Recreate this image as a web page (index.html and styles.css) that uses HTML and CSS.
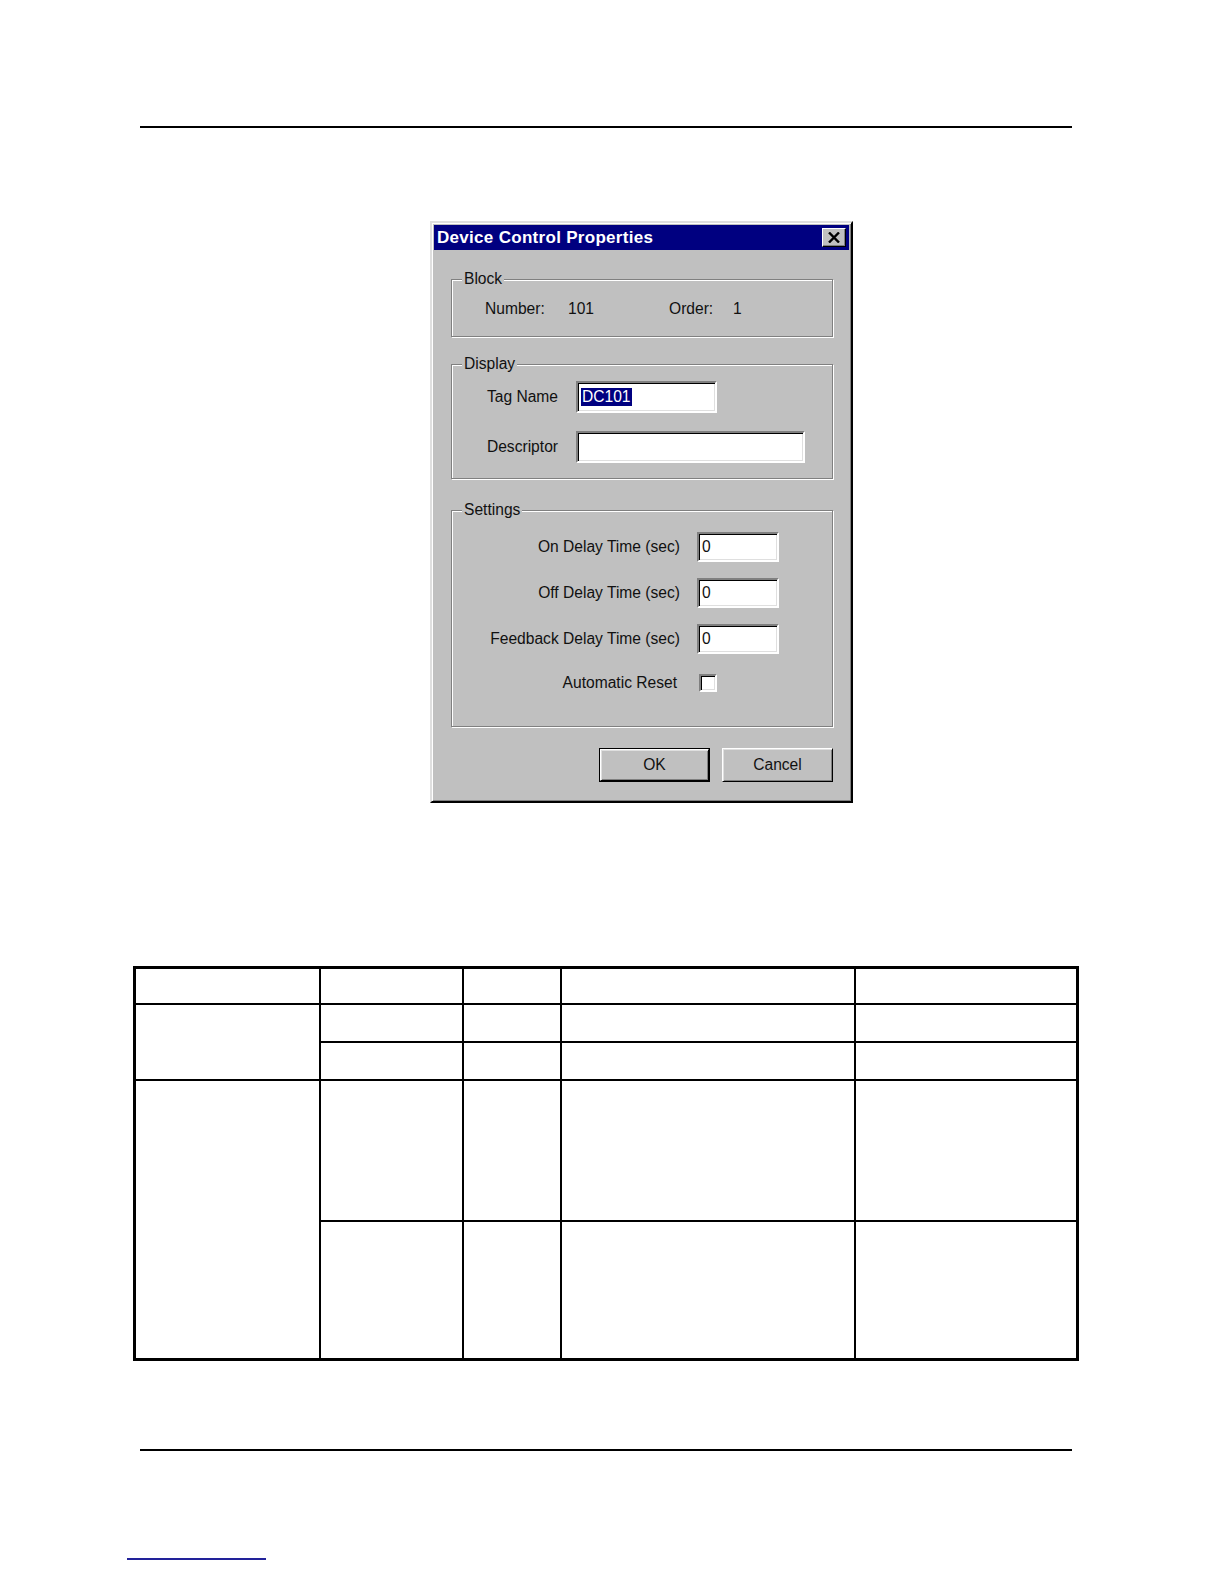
FILE: index.html
```html
<!DOCTYPE html>
<html lang="en">
<head>
<meta charset="utf-8">
<title>Device Control Properties</title>
<link rel="stylesheet" href="styles.css">
</head>
<body>
<div class="page">
  <div class="rule rule-top"></div>

  <div class="dialog">
    <div class="titlebar">
      <span class="title">Device Control Properties</span>
      <span class="close-btn">
        <svg width="12" height="11" viewBox="0 0 12 11"><path d="M1 0.5 L11 10.5 M11 0.5 L1 10.5" stroke="#000" stroke-width="2.4" fill="none"/></svg>
      </span>
    </div>
    <div class="dialog-body">
      <div class="group group-block">
        <span class="legend">Block</span>
        <div class="block-row">
          <span class="bl-num-label">Number:</span>
          <span class="bl-num">101</span>
          <span class="bl-ord-label">Order:</span>
          <span class="bl-ord">1</span>
        </div>
      </div>

      <div class="group group-display">
        <span class="legend">Display</span>
        <div class="form-grid display-grid">
          <span class="lbl">Tag Name</span>
          <div class="field field-tag"><span class="sel">DC101</span></div>
          <span class="lbl">Descriptor</span>
          <div class="field field-desc"></div>
        </div>
      </div>

      <div class="group group-settings">
        <span class="legend">Settings</span>
        <div class="form-grid settings-grid">
          <span class="lbl">On Delay Time (sec)</span>
          <div class="field field-num">0</div>
          <span class="lbl">Off Delay Time (sec)</span>
          <div class="field field-num">0</div>
          <span class="lbl">Feedback Delay Time (sec)</span>
          <div class="field field-num">0</div>
          <span class="lbl lbl-check">Automatic Reset</span>
          <div class="check-cell"><span class="checkbox"></span></div>
        </div>
      </div>

      <div class="buttons">
        <span class="btn btn-default"><span class="btn-face">OK</span></span>
        <span class="btn"><span class="btn-face">Cancel</span></span>
      </div>
    </div>
  </div>

  <div class="grid-table">
    <div class="cell"></div>
    <div class="cell"></div>
    <div class="cell"></div>
    <div class="cell"></div>
    <div class="cell"></div>

    <div class="cell span2"></div>
    <div class="cell"></div>
    <div class="cell"></div>
    <div class="cell"></div>
    <div class="cell"></div>
    <div class="cell"></div>
    <div class="cell"></div>
    <div class="cell"></div>
    <div class="cell"></div>

    <div class="cell span2"></div>
    <div class="cell"></div>
    <div class="cell"></div>
    <div class="cell"></div>
    <div class="cell"></div>
    <div class="cell"></div>
    <div class="cell"></div>
    <div class="cell"></div>
    <div class="cell"></div>
  </div>

  <div class="rule rule-bottom"></div>
  <div class="link-line"></div>
</div>
</body>
</html>
```

FILE: styles.css
```css
html, body {
  margin: 0;
  padding: 0;
  background: #fff;
}

.page {
  width: 1224px;
  height: 1584px;
  overflow: hidden;
  font-family: "Liberation Sans", Arial, sans-serif;
}

.rule {
  width: 932px;
  margin-left: 140px;
  border-top: 2px solid #000;
}

.rule-top {
  margin-top: 126px;
}

/* ---------- Dialog ---------- */
.dialog {
  box-sizing: border-box;
  width: 423px;
  height: 582px;
  margin: 93px 0 0 430px;
  padding: 2px;
  background: #c0c0c0;
  border: 2px solid;
  border-color: #dfdfdf #000 #000 #dfdfdf;
  box-shadow: inset 1px 1px 0 #fff, inset -1px -1px 0 #808080;
  font-size: 15.6px;
  color: #111;
}

.titlebar {
  height: 25px;
  background: #000080;
  display: flex;
  align-items: center;
  justify-content: space-between;
  padding: 0 3px 0 3px;
}

.title {
  color: #fff;
  font-weight: bold;
  font-size: 17px;
  letter-spacing: 0.3px;
}

.close-btn {
  box-sizing: border-box;
  width: 24px;
  height: 19px;
  background: #c0c0c0;
  border: 1px solid;
  border-color: #fff #000 #000 #fff;
  box-shadow: inset -1px -1px 0 #808080;
  display: flex;
  align-items: center;
  justify-content: center;
}

.dialog-body {
  padding: 0 16px 0 17px;
}

.group {
  position: relative;
  box-sizing: border-box;
  border: 1px solid #808080;
  box-shadow: inset 1px 1px 0 #fff, 1px 1px 0 #fff;
}

.legend {
  position: absolute;
  top: -10px;
  left: 10px;
  padding: 0 2px;
  line-height: 18px;
  background: #c0c0c0;
}

.group-block {
  margin-top: 29px;
  height: 58px;
}

.block-row {
  display: flex;
  padding: 20px 0 0 33px;
  line-height: 18px;
}

.bl-num-label { width: 83px; }
.bl-num { width: 101px; }
.bl-ord-label { width: 64px; }

.group-display {
  margin-top: 27px;
  height: 115px;
}

.form-grid {
  display: grid;
  align-items: center;
}

.display-grid {
  grid-template-columns: 106px auto;
  column-gap: 18px;
  row-gap: 18px;
  justify-items: start;
  padding-top: 16px;
}

.display-grid .lbl {
  justify-self: end;
}

.field {
  box-sizing: border-box;
  background: #fff;
  border: 2px solid;
  border-color: #808080 #fff #fff #808080;
  box-shadow: inset 1px 1px 0 #000, inset -1px -1px 0 #dfdfdf;
  display: flex;
  align-items: center;
  padding-left: 3px;
  line-height: 18px;
}

.field-tag {
  width: 141px;
  height: 32px;
}

.field-desc {
  width: 229px;
  height: 32px;
}

.sel {
  background: #000080;
  color: #fff;
  padding: 0 1px;
}

.group-settings {
  margin-top: 31px;
  height: 217px;
}

.settings-grid {
  grid-template-columns: 228px 82px;
  column-gap: 17px;
  row-gap: 16px;
  padding-top: 21px;
}

.settings-grid .lbl {
  text-align: right;
}

.field-num {
  width: 82px;
  height: 30px;
}

.lbl-check {
  margin-right: 3px;
  margin-top: 4px;
}

.check-cell {
  margin-top: 4px;
  padding-left: 2px;
  height: 18px;
}

.checkbox {
  display: block;
  box-sizing: border-box;
  width: 18px;
  height: 18px;
  background: #fff;
  border: 2px solid;
  border-color: #808080 #fff #fff #808080;
  box-shadow: inset 1px 1px 0 #000, inset -1px -1px 0 #dfdfdf;
}

.buttons {
  display: flex;
  justify-content: flex-end;
  gap: 12px;
  margin-top: 21px;
}

.btn {
  box-sizing: border-box;
  width: 111px;
  height: 34px;
  display: flex;
}

.btn-face {
  flex: 1;
  display: flex;
  align-items: center;
  justify-content: center;
  background: #c0c0c0;
  border: 1px solid;
  border-color: #fff #000 #000 #fff;
  box-shadow: inset 1px 1px 0 #dfdfdf, inset -1px -1px 0 #808080;
}

.btn-default {
  border: 1px solid #000;
}

/* ---------- Grid table ---------- */
.grid-table {
  box-sizing: border-box;
  width: 946px;
  height: 395px;
  margin: 163px 0 0 133px;
  padding: 3px;
  background: #000;
  display: grid;
  grid-template-columns: 183px 141px 96px 292px 220px;
  grid-template-rows: 34px 36px 36px 139px 136px;
  gap: 2px;
}

.cell {
  background: #fff;
}

.span2 {
  grid-row: span 2;
}

.rule-bottom {
  margin-top: 88px;
}

.link-line {
  width: 139px;
  margin: 107px 0 0 127px;
  border-top: 2px solid #22229a;
}
```
